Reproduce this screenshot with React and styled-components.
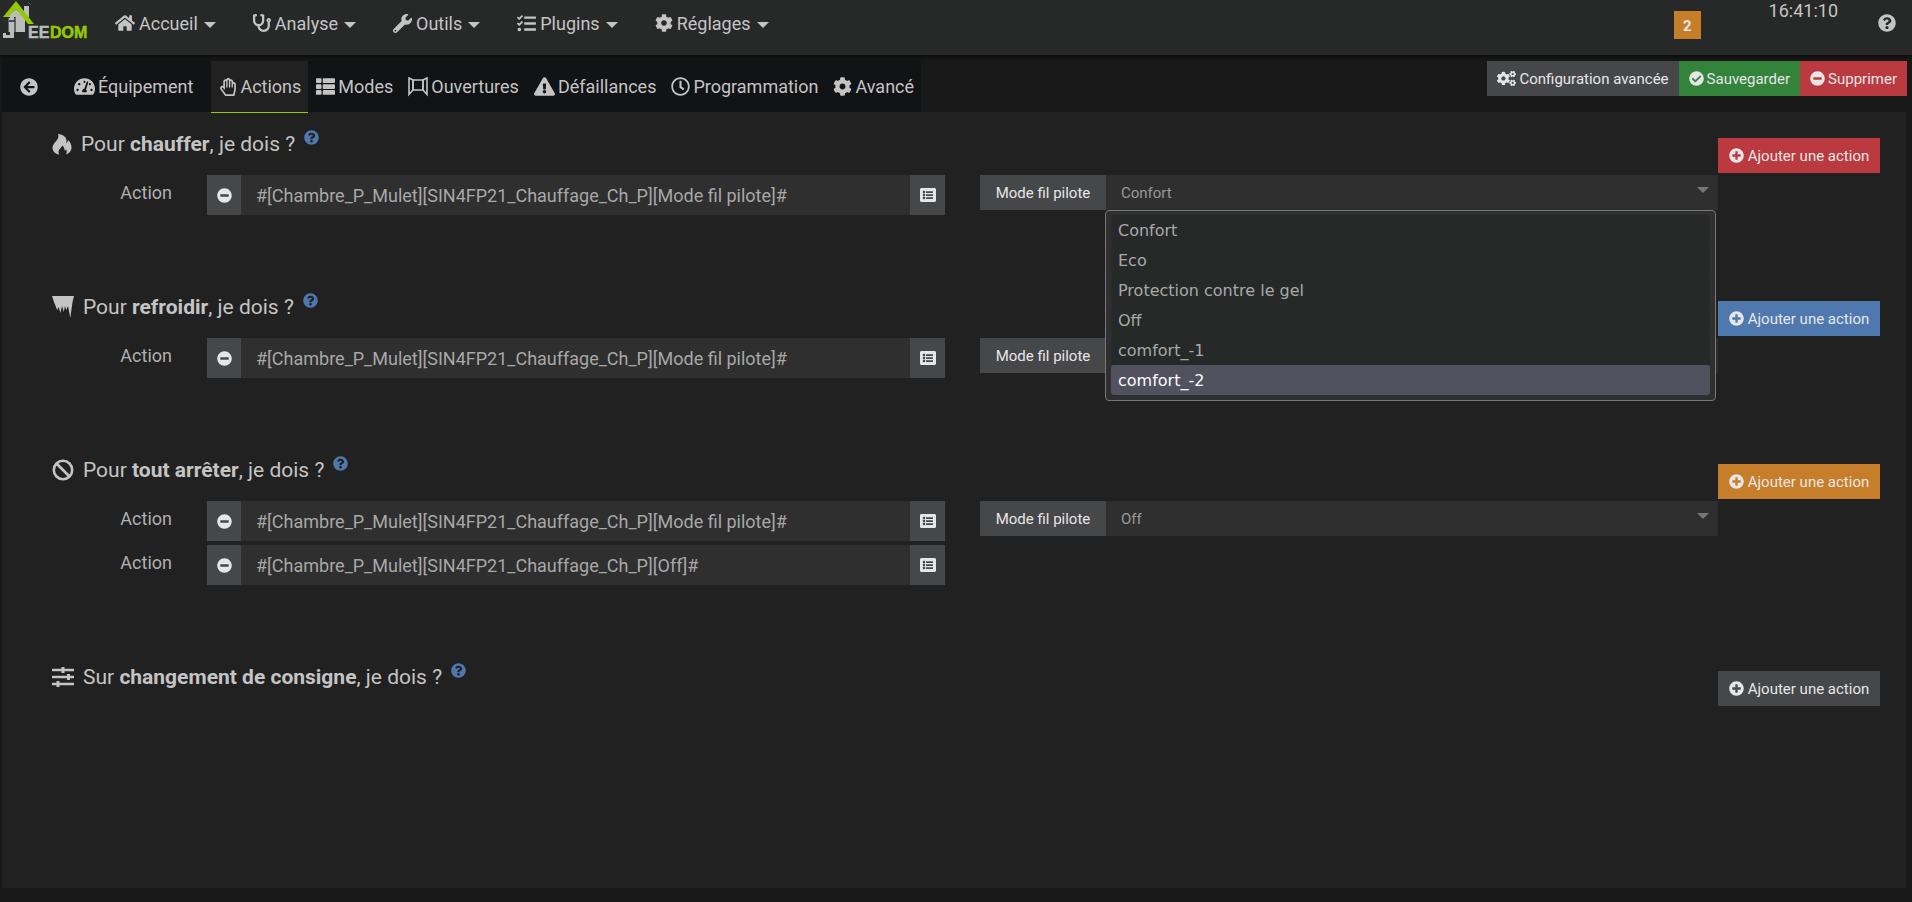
import React, { useState } from 'react';
import styled, { createGlobalStyle } from 'styled-components';
import {
  FaHome,
  FaStethoscope,
  FaWrench,
  FaTasks,
  FaCog,
  FaCogs,
  FaQuestionCircle,
  FaArrowCircleLeft,
  FaTachometerAlt,
  FaRegHandPaper,
  FaThList,
  FaExclamationTriangle,
  FaRegClock,
  FaCheckCircle,
  FaMinusCircle,
  FaPlusCircle,
  FaListAlt,
} from 'react-icons/fa';

const GlobalStyle = createGlobalStyle`
  * {
    box-sizing: border-box;
  }

  body {
    margin: 0;
    background: #191919;
    color: #c4c4c4;
    font-family: Roboto, sans-serif;
    font-size: 18px;
  }

  button, input, select {
    font-family: inherit;
    border: 0;
    border-radius: 0;
    margin: 0;
  }
`;

const Page = styled.div`
  display: flex;
  flex-direction: column;
  min-height: 100vh;
  padding-bottom: 14px;
`;

/* ---- top bar ---- */

const Header = styled.header`
  display: flex;
  height: 55px;
  background: #272928;
  box-shadow: 0 2px 5px rgba(0, 0, 0, 0.6);
`;

const LogoLink = styled.a`
  display: block;
  width: 100px;
`;

const Nav = styled.nav`
  display: flex;
  flex: 1;
`;

const NavItem = styled.a`
  display: flex;
  align-items: center;
  height: 46px;
  padding: 0 22px 0 15px;
  color: inherit;
  text-decoration: none;

  svg {
    margin-right: 4px;
  }
`;

const Caret = styled.span`
  margin: 3px 0 0 6px;
  border-top: 6px solid currentColor;
  border-left: 6px solid transparent;
  border-right: 6px solid transparent;
`;

const HeaderRight = styled.div`
  display: flex;
  align-items: flex-start;
  padding-right: 16px;
`;

const Badge = styled.a`
  margin: 11px 68px 0 0;
  padding: 0 9px;
  background: #c77e2a;
  color: #e6e6e6;
  font-size: 15px;
  font-weight: 700;
  line-height: 30px;
  height: 28px;
  text-decoration: none;
`;

const Clock = styled.time`
  line-height: 22px;
  margin-right: 40px;
`;

const HelpLink = styled.a`
  display: flex;
  align-items: center;
  height: 46px;
  color: inherit;
`;

/* ---- tabs and toolbar ---- */

const Toolbar = styled.div`
  display: flex;
  justify-content: space-between;
  align-items: flex-start;
  margin-top: 6px;
  padding: 0 5px 0 2px;
`;

const Tabs = styled.div`
  display: flex;
  height: 51px;
  background: #111315;
`;

const Tab = styled.button`
  position: relative;
  display: flex;
  align-items: center;
  height: ${({ $active }) => ($active ? '52px' : '51px')};
  padding: ${({ $wide }) => ($wide ? '0 18px' : '0 7px 0 8px')};
  background: ${({ $active }) => ($active ? '#212121' : 'transparent')};
  border-bottom: ${({ $active }) => ($active ? '1px solid #93c900' : '0')};
  color: #c4c4c4;
  font-size: 18px;
  cursor: pointer;

  svg {
    flex: none;
  }

  svg + span {
    margin-left: 3px;
  }
`;

const ButtonGroup = styled.div`
  display: flex;
`;

const colors = {
  grey: '#464749',
  green: '#33833b',
  red: '#ba3a3f',
  blue: '#4f79ae',
  orange: '#c77e2a',
};

const Button = styled.button`
  display: inline-flex;
  align-items: center;
  justify-content: center;
  height: 35px;
  padding: 0 10px;
  background: ${({ $color }) => colors[$color]};
  color: #e6e6e6;
  font-size: 15px;
  white-space: nowrap;
  cursor: pointer;

  svg {
    margin-right: 3px;
  }
`;

const AddButton = styled(Button)`
  min-width: 162px;

  svg {
    margin-right: 4px;
  }
`;

/* ---- content ---- */

const Panel = styled.main`
  flex: 1;
  margin: 0 6px 0 2px;
  background: #212121;
`;

const Section = styled.section`
  padding-bottom: 56px;
`;

const SectionHead = styled.div`
  display: flex;
  justify-content: space-between;
  align-items: flex-end;
  height: 63px;
  padding: 0 26px 2px 50px;
`;

const SectionTitle = styled.h2`
  display: flex;
  align-items: center;
  margin: 0 0 14px;
  color: #c4c4c4;
  font-size: 21px;
  font-weight: 400;
  line-height: 30px;

  > svg {
    margin-right: 9px;
  }
`;

const Tip = styled.sup`
  display: flex;
  align-self: flex-start;
  margin: 1px 0 0 9px;
  color: #4f79ae;
  font-size: 15px;
`;

const ActionRow = styled.div`
  display: grid;
  grid-template-columns: 170px minmax(0, 1fr) minmax(0, 1fr);
  column-gap: 35px;
  align-items: start;
  margin-bottom: 4px;
  padding-right: 188px;
`;

const ActionLabel = styled.label`
  color: #b0b0b0;
  line-height: 36px;
  text-align: right;
`;

const InputGroup = styled.div`
  display: flex;
`;

const AddonButton = styled.button`
  display: flex;
  align-items: center;
  justify-content: center;
  width: ${({ $end }) => ($end ? '35px' : '34px')};
  height: 40px;
  padding: 0;
  background: #464749;
  color: #e6e6e6;
  font-size: ${({ $end }) => ($end ? '16px' : '15px')};
  cursor: pointer;
`;

const CommandInput = styled.input`
  flex: 1;
  min-width: 0;
  height: 40px;
  padding: 0 15px;
  background: #2f2f2f;
  color: #a8a8a8;
  font-size: 18px;
  outline: none;
`;

const OptionGroup = styled.div`
  display: flex;
  height: 35px;
`;

const OptionLabel = styled.label`
  min-width: 126px;
  padding: 0 15px;
  background: #464749;
  color: #e6e6e6;
  font-size: 15px;
  line-height: 36px;
  text-align: center;
  white-space: nowrap;
`;

const SelectBox = styled.div`
  position: relative;
  display: flex;
  flex: 1;
`;

const Select = styled.select`
  flex: 1;
  appearance: none;
  padding: 0 40px 0 15px;
  background: #2f2f2f;
  color: #999;
  font-size: 15px;
  outline: none;
`;

const SelectArrow = styled.span`
  position: absolute;
  top: 12px;
  right: 9px;
  border-top: 6px solid #777;
  border-left: 6px solid transparent;
  border-right: 6px solid transparent;
  pointer-events: none;
`;

const Menu = styled.ul`
  position: absolute;
  z-index: 2;
  top: 100%;
  left: -1px;
  right: 2px;
  margin: 0;
  padding: 4px 5px 5px;
  background: #2f2f2f;
  border: 1px solid #77777c;
  border-radius: 4px;
  list-style: none;
`;

const MenuItem = styled.li`
  padding: 2px 7px 0;
  background: ${({ $hover }) => ($hover ? '#52525e' : '#272928')};
  border-radius: 3px;
  color: ${({ $hover }) => ($hover ? '#fbfbfe' : '#a8a8a8')};
  font-family: Verdana, 'DejaVu Sans', sans-serif;
  font-size: 16px;
  line-height: 28px;
`;

const Logo = () => (
  <svg width="92" height="44" viewBox="0 0 92 44" role="img" aria-label="Jeedom">
    <path d="M24 6h5v11h-5z" fill="#bcbcbc" />
    <path d="M28 2l3 3" stroke="#555" strokeWidth="1" />
    <path d="M8 16l8-7 9 9v14H8z" fill="#bcbcbc" />
    <path d="M7.500 17.500h7.500v15M8 17v15" stroke="#272928" strokeWidth="1.200" fill="none" />
    <path d="M10 17h4v3h-4z" fill="#bcbcbc" />
    <path d="M9 21h6" stroke="#272928" strokeWidth="1.500" />
    <path d="M10 22h4v16H3v-5h3v2h4z" fill="#bcbcbc" />
    <path d="M3 17L16 1l18 23h-6L16 9l-8 8z" fill="#93c900" />
    <text y="38" fontFamily="'Liberation Sans', Arial, sans-serif" fontWeight="700" fontSize="16" strokeWidth="0.500">
      <tspan x="28" fill="#bcbcbc" stroke="#bcbcbc">EE</tspan>
      <tspan x="50" fill="#93c900" stroke="#93c900">DOM</tspan>
    </text>
  </svg>
);

const WindowIcon = () => (
  <svg width="20" height="20" viewBox="0 0 20 20" fill="none" stroke="currentColor" strokeWidth="1.600">
    <path d="M5 3h10M5 13h10M5 3v10M15 3v10" />
    <path d="M1 1l4 2v10l-4 4.500zM19 1l-4 2v10l4 4.500z" />
  </svg>
);

const FireIcon = () => (
  <svg width="20" height="21" viewBox="0 0 20 21" fill="currentColor">
    <path d="M6 0c5 .5 8.500 3 8.500 6.500 0 1-.2 1.700-.5 2.500 1.500-.7 2-2 2-3 2 1.500 3.500 4.500 3.500 7.500 0 3.500-2.500 6-5.500 7 1-1.500 1-3.500.2-5-.5.7-1 1-1.700 1 .3-2-.5-4-2.500-5 0 2-3.500 3.500-3.500 6.500 0 1 .3 1.800.8 2.500C3 20 .5 17 .5 14 .5 8 8.500 6 6 0z" />
  </svg>
);

const IcicleIcon = () => (
  <svg width="22" height="22" viewBox="0 0 22 22" fill="currentColor">
    <path d="M0 0h22l-1.500 6-2.200 16-2.300-12-1.700 4-1.300-4-1.200 6-1.800-6-1.600 7-1.600-6-1.600 3L2 6z" />
  </svg>
);

const StopIcon = () => (
  <svg width="22" height="22" viewBox="0 0 22 22" fill="none" stroke="currentColor" strokeWidth="2.600">
    <circle cx="11" cy="11" r="9.200" />
    <path d="M4.500 4.500l13 13" />
  </svg>
);

const SlidersIcon = () => (
  <svg width="22" height="20" viewBox="0 0 22 20" fill="none" stroke="currentColor" strokeWidth="2.600">
    <path d="M0 3h22M0 10h22M0 17h22" />
    <path d="M11 0v6M16.500 7v6M6 14v6" strokeWidth="3" />
  </svg>
);

const navItems = [
  { label: 'Accueil', icon: <FaHome size={20} /> },
  { label: 'Analyse', icon: <FaStethoscope size={18} /> },
  { label: 'Outils', icon: <FaWrench size={19} /> },
  { label: 'Plugins', icon: <FaTasks size={19} /> },
  { label: 'Réglages', icon: <FaCog size={18} /> },
];

const tabs = [
  { label: 'Équipement', icon: <FaTachometerAlt size={21} />, wide: true },
  { label: 'Actions', icon: <FaRegHandPaper size={18} /> },
  { label: 'Modes', icon: <FaThList size={19} /> },
  { label: 'Ouvertures', icon: <WindowIcon /> },
  { label: 'Défaillances', icon: <FaExclamationTriangle size={21} /> },
  { label: 'Programmation', icon: <FaRegClock size={19} /> },
  { label: 'Avancé', icon: <FaCog size={19} /> },
];

const modes = ['Confort', 'Eco', 'Protection contre le gel', 'Off', 'comfort_-1', 'comfort_-2'];

const PILOT_CMD = '#[Chambre_P_Mulet][SIN4FP21_Chauffage_Ch_P][Mode fil pilote]#';
const OFF_CMD = '#[Chambre_P_Mulet][SIN4FP21_Chauffage_Ch_P][Off]#';

const sections = [
  {
    id: 'heat',
    icon: <FireIcon />,
    verb: 'Pour',
    name: 'chauffer',
    color: 'red',
    actions: [{ cmd: PILOT_CMD, mode: 'Confort', open: true }],
  },
  {
    id: 'cool',
    icon: <IcicleIcon />,
    verb: 'Pour',
    name: 'refroidir',
    color: 'blue',
    actions: [{ cmd: PILOT_CMD, mode: 'Confort' }],
  },
  {
    id: 'stop',
    icon: <StopIcon />,
    verb: 'Pour',
    name: 'tout arrêter',
    color: 'orange',
    actions: [{ cmd: PILOT_CMD, mode: 'Off' }, { cmd: OFF_CMD }],
  },
  {
    id: 'change',
    icon: <SlidersIcon />,
    verb: 'Sur',
    name: 'changement de consigne',
    color: 'grey',
    actions: [],
  },
];

const ModeSelect = ({ id, initial, initiallyOpen }) => {
  const [mode, setMode] = useState(initial);
  const [open, setOpen] = useState(Boolean(initiallyOpen));
  const [hovered, setHovered] = useState('comfort_-2');

  const pick = (value) => {
    setMode(value);
    setOpen(false);
  };

  return (
    <OptionGroup>
      <OptionLabel htmlFor={id}>Mode fil pilote</OptionLabel>
      <SelectBox>
        <Select id={id} value={mode} onChange={(e) => pick(e.target.value)}>
          {modes.map((m) => (
            <option key={m}>{m}</option>
          ))}
        </Select>
        <SelectArrow />
        {open && (
          <Menu>
            {modes.map((m) => (
              <MenuItem
                key={m}
                $hover={m === hovered}
                onMouseEnter={() => setHovered(m)}
                onClick={() => pick(m)}
              >
                {m}
              </MenuItem>
            ))}
          </Menu>
        )}
      </SelectBox>
    </OptionGroup>
  );
};

const Action = ({ id, action }) => (
  <ActionRow>
    <ActionLabel htmlFor={id}>Action</ActionLabel>
    <InputGroup>
      <AddonButton type="button" aria-label="Supprimer l'action">
        <FaMinusCircle />
      </AddonButton>
      <CommandInput id={id} type="text" defaultValue={action.cmd} />
      <AddonButton type="button" $end aria-label="Choisir une commande">
        <FaListAlt />
      </AddonButton>
    </InputGroup>
    {action.mode && (
      <ModeSelect id={`${id}-mode`} initial={action.mode} initiallyOpen={action.open} />
    )}
  </ActionRow>
);

const App = () => {
  const [active, setActive] = useState('Actions');

  return (
    <Page>
      <GlobalStyle />
      <Header>
        <LogoLink href="#">
          <Logo />
        </LogoLink>
        <Nav>
          {navItems.map((item) => (
            <NavItem href="#" key={item.label}>
              {item.icon}
              {item.label}
              <Caret />
            </NavItem>
          ))}
        </Nav>
        <HeaderRight>
          <Badge href="#">2</Badge>
          <Clock>16:41:10</Clock>
          <HelpLink href="#" aria-label="Aide">
            <FaQuestionCircle size={18} />
          </HelpLink>
        </HeaderRight>
      </Header>

      <Toolbar>
        <Tabs>
          <Tab type="button" $wide aria-label="Retour">
            <FaArrowCircleLeft size={18} />
          </Tab>
          {tabs.map((tab) => (
            <Tab
              type="button"
              key={tab.label}
              $wide={tab.wide}
              $active={tab.label === active}
              onClick={() => setActive(tab.label)}
            >
              {tab.icon}
              <span>{tab.label}</span>
            </Tab>
          ))}
        </Tabs>
        <ButtonGroup>
          <Button type="button" $color="grey">
            <FaCogs size={19} />
            Configuration avancée
          </Button>
          <Button type="button" $color="green">
            <FaCheckCircle />
            Sauvegarder
          </Button>
          <Button type="button" $color="red">
            <FaMinusCircle />
            Supprimer
          </Button>
        </ButtonGroup>
      </Toolbar>

      <Panel>
        {sections.map((section) => (
          <Section key={section.id}>
            <SectionHead>
              <SectionTitle>
                {section.icon}
                <span>
                  {section.verb} <strong>{section.name}</strong>, je dois ?
                </span>
                <Tip>
                  <FaQuestionCircle />
                </Tip>
              </SectionTitle>
              <AddButton type="button" $color={section.color}>
                <FaPlusCircle />
                Ajouter une action
              </AddButton>
            </SectionHead>
            {section.actions.map((action, index) => (
              <Action key={index} id={`${section.id}-${index}`} action={action} />
            ))}
          </Section>
        ))}
      </Panel>
    </Page>
  );
};

export default App;
